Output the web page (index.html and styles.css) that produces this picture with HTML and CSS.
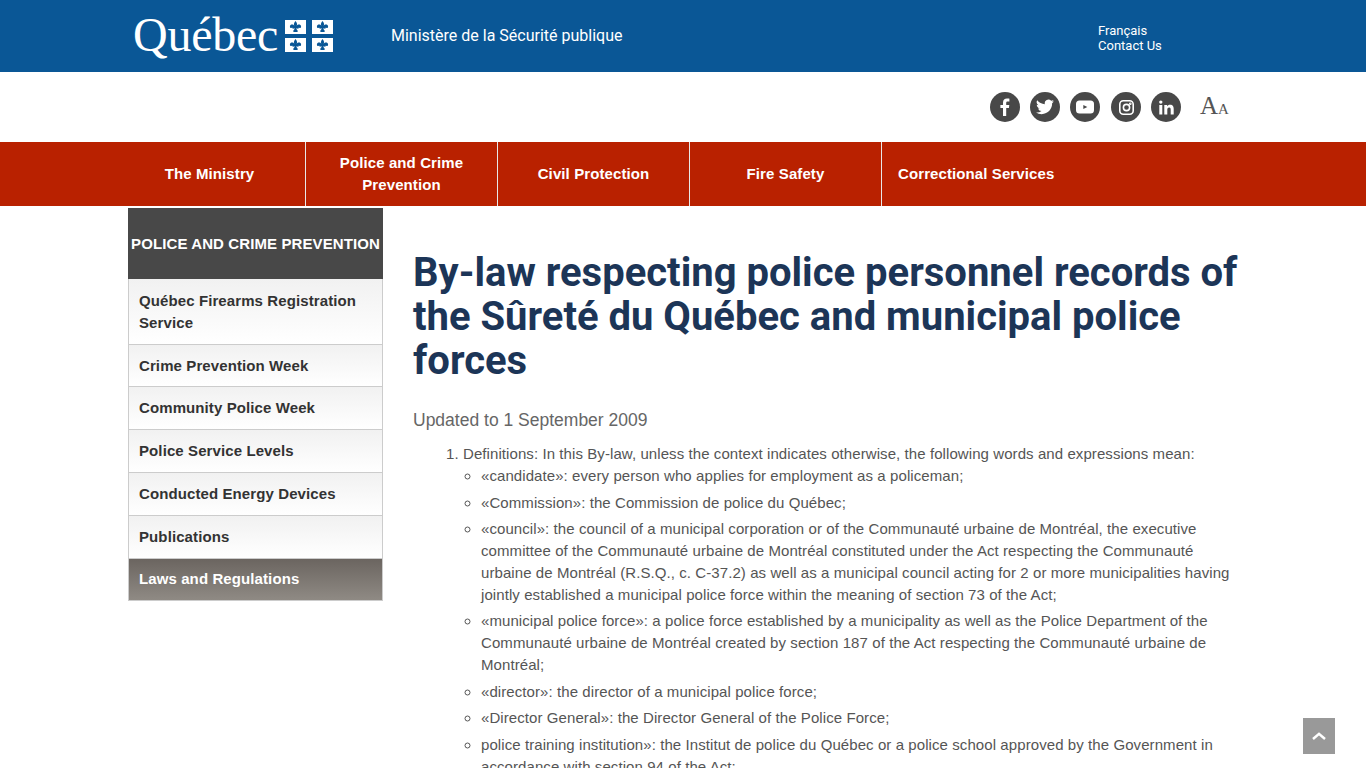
FILE: index.html
```html
<!DOCTYPE html>
<html lang="en">
<head>
	<meta charset="UTF-8">
	<title>By-law respecting police personnel records</title>
	<link rel="stylesheet" href="styles.css">
</head>
<body>
	<header class="top">
		<div class="wrap top-in">
			<a class="logo" href="#">
				<span class="logo-word">Québec</span>
				<svg class="flag" width="48" height="33" viewBox="0 0 48 33">
					<defs>
						<path id="lis" d="M0-6C1.500-4.300 2-2.800 1.200-1.200 2-2.800 5.400-3 5.600-.6 5.700.8 4.200 1.500 3.200.6 3.600 1.800 2 2.200 1.300 1.300H.9C1 2.500 1.600 3.300 2.300 3.800L2 5H-2L-2.300 3.800C-1.600 3.300-1 2.500-.9 1.300H-1.300C-2 2.200-3.600 1.800-3.200.6-4.200 1.500-5.700.8-5.600-.6-5.400-3-2-2.800-1.200-1.200-2-2.800-1.500-4.300 0-6Z"/>
					</defs>
					<rect width="21" height="14" fill="#fff"/>
					<rect x="27" width="21" height="14" fill="#fff"/>
					<rect y="18" width="21" height="14" fill="#fff"/>
					<rect x="27" y="18" width="21" height="14" fill="#fff"/>
					<use href="#lis" x="10.500" y="7" fill="#0a5796"/>
					<use href="#lis" x="37.500" y="7" fill="#0a5796"/>
					<use href="#lis" x="10.500" y="25" fill="#0a5796"/>
					<use href="#lis" x="37.500" y="25" fill="#0a5796"/>
				</svg>
			</a>
			<div class="ministry">Ministère de la Sécurité publique</div>
			<ul class="top-links">
				<li><a href="#">Français</a></li>
				<li><a href="#">Contact Us</a></li>
			</ul>
		</div>
	</header>

	<div class="wrap tools">
		<a class="social" href="#" aria-label="Facebook">
			<svg width="16" height="18" viewBox="0 0 16 18"><path fill="#fff" d="M6 18V10H3.400V6.900H6V4.700C6 2 7.600.6 10 .6c1.100 0 2.100.1 2.400.1V3.500H10.700C9.400 3.500 9.200 4.100 9.200 5V6.900H12.300L11.900 10H9.200V18Z"/></svg>
		</a>
		<a class="social" href="#" aria-label="Twitter">
			<svg width="18" height="16" viewBox="0 0 24 20"><path fill="#fff" d="M24 2.400a9.800 9.800 0 0 1-2.800.8A5 5 0 0 0 23.300.5a9.800 9.800 0 0 1-3.100 1.200 4.900 4.900 0 0 0-8.400 4.500A14 14 0 0 1 1.700.9a4.900 4.900 0 0 0 1.500 6.600 4.900 4.900 0 0 1-2.200-.6c0 2.400 1.700 4.400 3.900 4.900a4.900 4.900 0 0 1-2.200.1 4.900 4.900 0 0 0 4.600 3.400A9.900 9.900 0 0 1 0 17.300 14 14 0 0 0 7.500 19.500c9.100 0 14.300-7.700 14-14.600A10 10 0 0 0 24 2.400Z"/></svg>
		</a>
		<a class="social" href="#" aria-label="YouTube">
			<svg width="18" height="14" viewBox="0 0 18 14"><rect width="18" height="13" y=".5" rx="3.500" fill="#fff"/><path fill="#484848" d="M7.300 5 11.300 7 7.300 9Z"/></svg>
		</a>
		<a class="social" href="#" aria-label="Instagram">
			<svg width="15" height="15" viewBox="0 0 15 15" fill="none" stroke="#fff" stroke-width="1.600"><rect x=".8" y=".8" width="13.400" height="13.400" rx="3.500"/><circle cx="7.500" cy="7.500" r="3.100"/><circle cx="11.300" cy="3.700" r=".5"/></svg>
		</a>
		<a class="social" href="#" aria-label="LinkedIn">
			<svg width="15" height="15" viewBox="0 0 15 15"><path fill="#fff" d="M.3 5H3.300V14.500H.3ZM1.800.4A1.700 1.700 0 1 1 1.800 3.800 1.700 1.700 0 0 1 1.800.4ZM5.300 5H8.100V6.300C8.600 5.400 9.700 4.800 11 4.800 14 4.800 14.700 6.700 14.700 9.300V14.500H11.700V9.900C11.700 8.700 11.600 7.400 10.200 7.400 8.700 7.400 8.300 8.500 8.300 9.800V14.500H5.300Z"/></svg>
		</a>
		<a class="font-size" href="#"><span class="big">A</span><span class="small">A</span></a>
	</div>

	<nav class="menu">
		<div class="menu-in">
			<a href="#">The Ministry</a>
			<a href="#">Police and Crime Prevention</a>
			<a href="#">Civil Protection</a>
			<a href="#">Fire Safety</a>
			<a class="wide" href="#">Correctional Services</a>
		</div>
	</nav>

	<div class="wrap page">
		<aside class="side">
			<h2>POLICE AND CRIME PREVENTION</h2>
			<ul>
				<li><a href="#">Québec Firearms Registration Service</a></li>
				<li><a href="#">Crime Prevention Week</a></li>
				<li><a href="#">Community Police Week</a></li>
				<li><a href="#">Police Service Levels</a></li>
				<li><a href="#">Conducted Energy Devices</a></li>
				<li><a href="#">Publications</a></li>
				<li class="on"><a href="#">Laws and Regulations</a></li>
			</ul>
		</aside>
		<main class="content">
			<h1>By-law respecting police personnel records of the Sûreté du Québec and municipal police forces</h1>
			<p class="updated">Updated to 1 September 2009</p>
			<ol class="law">
				<li>Definitions: In this By-law, unless the context indicates otherwise, the following words and expressions mean:
					<ul>
						<li>«candidate»: every person who applies for employment as a policeman;</li>
						<li>«Commission»: the Commission de police du Québec;</li>
						<li>«council»: the council of a municipal corporation or of the Communauté urbaine de Montréal, the executive committee of the Communauté urbaine de Montréal constituted under the Act respecting the Communauté urbaine de Montréal (R.S.Q., c. C-37.2) as well as a municipal council acting for 2 or more municipalities having jointly established a municipal police force within the meaning of section 73 of the Act;</li>
						<li>«municipal police force»: a police force established by a municipality as well as the Police Department of the Communauté urbaine de Montréal created by section 187 of the Act respecting the Communauté urbaine de Montréal;</li>
						<li>«director»: the director of a municipal police force;</li>
						<li>«Director General»: the Director General of the Police Force;</li>
						<li>police training institution»: the Institut de police du Québec or a police school approved by the Government in accordance with section 94 of the Act;</li>
					</ul>
				</li>
			</ol>
		</main>
	</div>

	<a class="to-top" href="#" aria-label="Back to top">
		<svg width="14" height="8" viewBox="0 0 14 8"><path fill="none" stroke="#fff" stroke-width="2.500" d="M1 7 7 1.800 13 7"/></svg>
	</a>
</body>
</html>
```

FILE: styles.css
```css
html,body{margin:0;padding:0;height:100%;overflow:hidden;}
body{background:#fff;font-family:"Liberation Sans",Arial,sans-serif;font-size:15px;color:#555;}
a{text-decoration:none;color:inherit;}
ul,ol{margin:0;padding:0;}
.wrap{width:1110px;margin:0 auto;}

/* blue band */
.top{height:72px;background:#0a5796;color:#fff;}
.top-in{height:72px;display:flex;align-items:center;}
.logo{display:flex;align-items:center;width:263px;}
.logo-word{font-family:"Liberation Serif",serif;font-size:48px;line-height:44px;margin:0 7px 3px 5px;letter-spacing:-.25px;}
.flag{display:block;margin-top:0;}
.ministry{width:707px;font-family:Roboto,sans-serif;font-size:16px;margin-top:-1px;}
.top-links{list-style:none;font-family:Roboto,sans-serif;font-size:13px;line-height:15px;margin-top:3px;}

/* socials */
.tools{height:70px;display:flex;align-items:center;justify-content:flex-end;}
.social{width:30px;height:30px;border-radius:50%;background:#484848;display:flex;align-items:center;justify-content:center;margin-right:10px;}
.social:nth-child(3){margin-right:11px;}
.font-size{font-family:"Liberation Serif",serif;color:#555;margin-left:9px;width:38px;margin-bottom:2px;}
.font-size .big{font-size:25px;}
.font-size .small{font-size:15px;}

/* red menu */
.menu{height:64px;background:#b92100;}
.menu-in{width:1140px;box-sizing:border-box;padding-left:1px;margin:0 auto;display:flex;height:64px;}
.menu-in a{width:192px;box-sizing:border-box;border-right:1px solid #e8e8e8;display:flex;align-items:center;justify-content:center;text-align:center;padding:0 16px;color:#fff;font-weight:bold;font-size:15px;line-height:22px;letter-spacing:.1px;}
.menu-in a.wide{border:0;justify-content:flex-start;width:auto;white-space:nowrap;}

/* page */
.page{display:flex;align-items:flex-start;padding-top:2px;}
.side{width:255px;flex:none;}
.side h2{margin:0;height:71px;background:#484848;color:#fff;font-size:15px;font-weight:bold;line-height:71px;text-align:center;white-space:nowrap;letter-spacing:.1px;}
.side ul{list-style:none;border:1px solid #ccc;border-top:0;}
.side li{border-bottom:1px solid #ccc;background:linear-gradient(#f1f1f1,#fff);}
.side li a{display:block;padding:10px;color:#333;font-weight:bold;font-size:15px;line-height:22px;letter-spacing:.1px;}
.side li:first-child a{padding-top:11px;}
.side li:nth-child(2) a{padding-bottom:9px;}
.side li.on{border-bottom:0;background:linear-gradient(#6b6560,#8f8a84);}
.side li.on a{color:#fff;padding-top:9px;}

.content{margin-left:30px;flex:1;}
h1{margin:43px 0 0;font-family:Roboto,sans-serif;font-size:40px;line-height:44px;font-weight:bold;color:#1c3557;}
.updated{margin:24px 0 0;font-size:17.500px;line-height:26px;color:#666;}
.law{margin:10px 0 0;padding-left:50px;line-height:21.750px;letter-spacing:.08px;}
.law ul{padding-left:18px;list-style:circle;}
.law ul li{margin-bottom:5px;}
.to-top{position:fixed;right:31px;bottom:14px;width:32px;height:36px;background:#999;display:flex;align-items:center;justify-content:center;}
```
